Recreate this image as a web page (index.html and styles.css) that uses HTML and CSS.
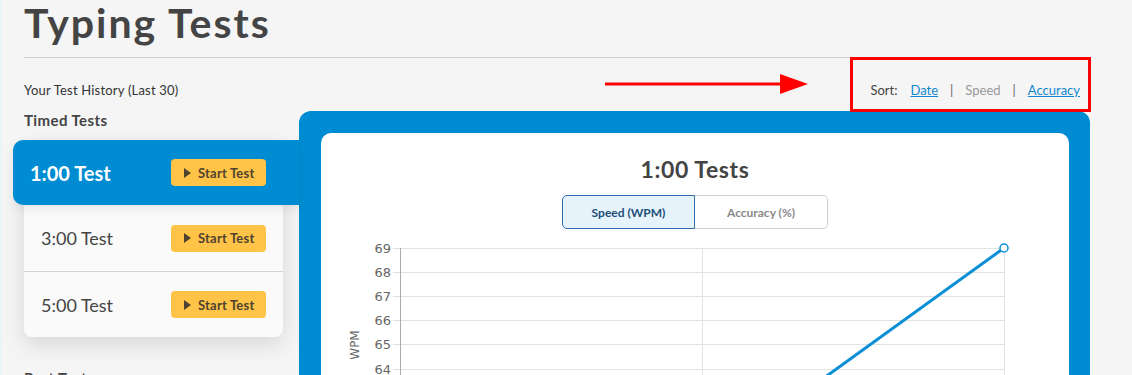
FILE: index.html
```html
<!DOCTYPE html>
<html lang="en">
<head>
<meta charset="utf-8">
<title>Typing Tests</title>
<link rel="stylesheet" href="styles.css">
</head>
<body>
<div class="page">
  <h1 class="title">Typing Tests</h1>
  <div class="topbar">
    <span class="history">Your Test History (Last 30)</span>
    <div class="sort-wrap">
      <svg class="arrow" width="204" height="22" viewBox="0 0 204 22" aria-hidden="true">
        <rect x="0" y="9.5" width="180" height="3" fill="#ff0000"/>
        <polygon points="175,1 203,11 175,21" fill="#ff0000"/>
      </svg>
      <div class="sort">
        <span class="sort-label">Sort:</span>
        <a class="sort-link" href="#">Date</a>
        <span class="sep">|</span>
        <span class="sort-off">Speed</span>
        <span class="sep">|</span>
        <a class="sort-link" href="#">Accuracy</a>
      </div>
    </div>
  </div>
  <div class="main">
    <aside class="side">
      <h2 class="side-head">Timed Tests</h2>
      <div class="card">
        <div class="row active">
          <span class="row-name">1:00 Test</span>
          <button class="start"><svg width="7" height="10" viewBox="0 0 7 10"><polygon points="0,0 7,5 0,10" fill="#4e4330"/></svg>Start Test</button>
        </div>
        <div class="row">
          <span class="row-name">3:00 Test</span>
          <button class="start"><svg width="7" height="10" viewBox="0 0 7 10"><polygon points="0,0 7,5 0,10" fill="#4e4330"/></svg>Start Test</button>
        </div>
        <div class="row divided">
          <span class="row-name">5:00 Test</span>
          <button class="start"><svg width="7" height="10" viewBox="0 0 7 10"><polygon points="0,0 7,5 0,10" fill="#4e4330"/></svg>Start Test</button>
        </div>
      </div>
      <h2 class="side-head past">Past Tests</h2>
    </aside>
    <section class="panel">
      <div class="chart-card">
        <h3 class="chart-title">1:00 Tests</h3>
        <div class="toggle">
          <span class="tog on">Speed (WPM)</span>
          <span class="tog">Accuracy (%)</span>
        </div>
        <svg class="chart" width="748" height="150" viewBox="0 0 748 150">
          <g stroke="#e2e2e2" stroke-width="1">
            <line x1="72" y1="12.5" x2="684" y2="12.5"/>
            <line x1="72" y1="36.5" x2="684" y2="36.5"/>
            <line x1="72" y1="60.5" x2="684" y2="60.5"/>
            <line x1="72" y1="84.5" x2="684" y2="84.5"/>
            <line x1="72" y1="108.5" x2="684" y2="108.5"/>
            <line x1="72" y1="133.5" x2="684" y2="133.5"/>
            <line x1="381.5" y1="12" x2="381.5" y2="150"/>
            <line x1="683.5" y1="12" x2="683.5" y2="150"/>
          </g>
          <line x1="79.5" y1="12" x2="79.5" y2="150" stroke="#a9a9a9" stroke-width="1"/>
          <g class="ylab" text-anchor="end">
            <text x="70" y="17">69</text>
            <text x="70" y="41">68</text>
            <text x="70" y="65">67</text>
            <text x="70" y="89">66</text>
            <text x="70" y="113">65</text>
            <text x="70" y="138">64</text>
          </g>
          <text class="axis-title" transform="translate(38 109) rotate(-90)" text-anchor="middle">WPM</text>
          <polyline points="683,12 478,160" fill="none" stroke="#0a8fd6" stroke-width="3"/>
          <circle cx="683" cy="12" r="4" fill="#ffffff" stroke="#0a8fd6" stroke-width="1.5"/>
        </svg>
      </div>
    </section>
  </div>
</div>
</body>
</html>
```

FILE: styles.css
```css
* { box-sizing: border-box; }

html, body {
  margin: 0;
  background: #f5f5f5;
}

body {
  font-family: Lato, "Open Sans", sans-serif;
  color: #444;
  border-left: 2px solid #e9f5f7;
  min-height: 375px;
  overflow: hidden;
}

.page {
  width: 1066px;
  margin-left: 22px;
}

.title {
  margin: 0;
  font-size: 41px;
  line-height: 46px;
  font-weight: 700;
  letter-spacing: 2px;
  color: #444;
  padding-bottom: 11px;
  border-bottom: 1px solid #cfcfcf;
}

.topbar {
  display: flex;
  justify-content: space-between;
  align-items: center;
  height: 53px;
}

.history {
  font-size: 13px;
  letter-spacing: 0.2px;
  color: #333;
  padding-top: 10px;
}

.sort-wrap {
  position: relative;
  align-self: flex-start;
  margin-top: -1px;
  margin-right: -1px;
}

.arrow {
  position: absolute;
  left: -245px;
  top: 16px;
}

.sort {
  display: flex;
  align-items: center;
  height: 55px;
  border: 3px solid #ff0000;
  padding: 10px 8px 0 17px;
  font-size: 13px;
}

.sort-label { color: #444; margin-right: 13px; }
.sort-link { color: #1188d0; text-decoration: underline; }
.sort-off { color: #999; }
.sep { color: #666; margin: 0 12px; }

.main {
  display: flex;
  align-items: flex-start;
}

.side {
  width: 275px;
  flex: none;
}

.side-head {
  margin: 0 0 11px;
  font-size: 15px;
  line-height: 18px;
  font-weight: 700;
  letter-spacing: 0.4px;
  color: #444;
}

.side-head.past {
  margin-top: 32px;
}

.card {
  margin-right: 16px;
  background: #fafafa;
  border-radius: 8px;
  box-shadow: 0 8px 22px rgba(0, 0, 0, 0.12);
}

.row {
  display: flex;
  align-items: center;
  justify-content: space-between;
  height: 66px;
  padding: 0 17px;
}

.row-name {
  font-size: 18px;
  color: #444;
}

.row.active {
  height: 65px;
  margin: 0 -16px 0 -11px;
  padding: 0 33px 0 17px;
  background: #008cd2;
  border-radius: 10px 0 0 10px;
  box-shadow: 0 4px 10px rgba(0, 0, 0, 0.08);
  position: relative;
}

.row.active .row-name {
  color: #fff;
  font-size: 20px;
  font-weight: 700;
}

.row.divided {
  border-top: 1px solid #d4d4d4;
  height: 66px;
}

.start {
  display: inline-flex;
  align-items: center;
  gap: 7px;
  width: 95px;
  height: 27px;
  padding: 0 0 0 13px;
  border: 0;
  border-radius: 4px;
  background: #ffc447;
  font-family: Lato, sans-serif;
  font-weight: 700;
  font-size: 13px;
  letter-spacing: 0.2px;
  color: #4e4330;
}

.panel {
  flex: 1;
  background: #008cd2;
  border-radius: 12px 12px 0 0;
  padding: 22px 21px 0 22px;
  min-height: 300px;
}

.chart-card {
  background: #fff;
  border-radius: 10px;
  padding-top: 23px;
  display: flex;
  flex-direction: column;
  align-items: center;
}

.chart-title {
  margin: 0;
  font-size: 23px;
  line-height: 26px;
  font-weight: 700;
  letter-spacing: 0.6px;
  color: #444;
}

.toggle {
  display: flex;
  margin-top: 13px;
}

.tog {
  width: 133px;
  height: 34px;
  display: flex;
  align-items: center;
  justify-content: center;
  font-size: 12px;
  font-weight: 700;
  color: #8a8a8a;
  border: 1px solid #cfcfcf;
  border-left: 0;
  border-radius: 0 5px 5px 0;
}

.tog.on {
  color: #1d4f79;
  background: #e6f3fb;
  border: 1px solid #2f6cab;
  border-radius: 5px 0 0 5px;
}

.chart {
  display: block;
  margin-top: 7px;
}

.ylab text {
  font-family: "DejaVu Sans", sans-serif;
  font-size: 13px;
  fill: #666;
}

.axis-title {
  font-family: "DejaVu Sans", sans-serif;
  font-size: 12px;
  fill: #666;
}
```
